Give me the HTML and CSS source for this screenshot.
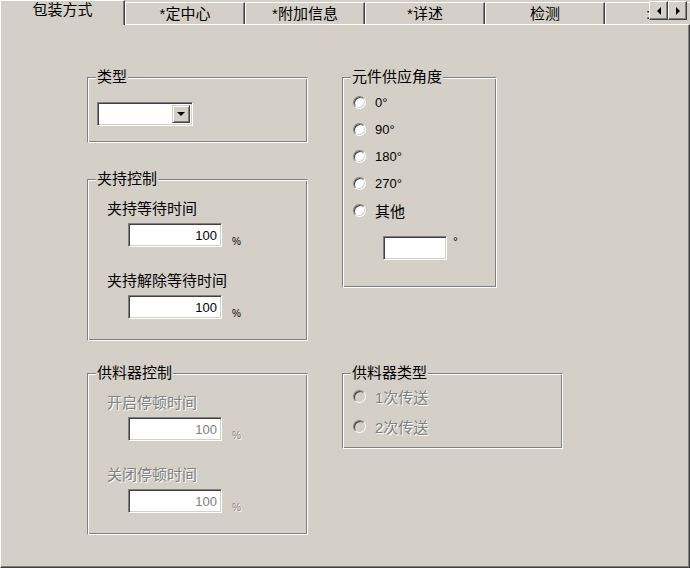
FILE: index.html
```html
<!DOCTYPE html>
<html lang="zh-CN">
<head>
    <meta charset="UTF-8">
    <title>包装方式</title>
    <link rel="stylesheet" href="styles.css">
</head>
<body>
    <div class="window">
        <div class="tabs">
            <div class="tab active">包装方式</div>
            <div class="tab">*定中心</div>
            <div class="tab">*附加信息</div>
            <div class="tab">*详述</div>
            <div class="tab">检测</div>
            <div class="tab tab-cut">:</div>
            <div class="tab-scroll">
                <button class="arrow-btn"><span class="arrow-left"></span></button>
                <button class="arrow-btn"><span class="arrow-right"></span></button>
            </div>
        </div>

        <div class="panel">
            <div class="col">
                <div class="group g-type">
                    <span class="group-title">类型</span>
                    <div class="combo">
                        <span class="combo-btn"><span class="arrow-down"></span></span>
                    </div>
                </div>

                <div class="group g-clamp">
                    <span class="group-title">夹持控制</span>
                    <div class="field-label">夹持等待时间</div>
                    <div class="field-row">
                        <input class="edit" type="text" value="100">
                        <span class="unit">%</span>
                    </div>
                    <div class="field-label second">夹持解除等待时间</div>
                    <div class="field-row">
                        <input class="edit" type="text" value="100">
                        <span class="unit">%</span>
                    </div>
                </div>
            </div>

            <div class="group g-angle">
                <span class="group-title">元件供应角度</span>
                <label class="radio-row"><input class="radio" type="radio" name="angle"><span class="num">0°</span></label>
                <label class="radio-row"><input class="radio" type="radio" name="angle"><span class="num">90°</span></label>
                <label class="radio-row"><input class="radio" type="radio" name="angle"><span class="num">180°</span></label>
                <label class="radio-row"><input class="radio" type="radio" name="angle"><span class="num">270°</span></label>
                <label class="radio-row"><input class="radio" type="radio" name="angle"><span>其他</span></label>
                <div class="angle-row">
                    <input class="edit edit-short" type="text" value="">
                    <span class="degree">°</span>
                </div>
            </div>

            <div class="group g-feedctl">
                <span class="group-title">供料器控制</span>
                <div class="field-label disabled">开启停顿时间</div>
                <div class="field-row">
                    <input class="edit" type="text" value="100" disabled>
                    <span class="unit disabled">%</span>
                </div>
                <div class="field-label second disabled">关闭停顿时间</div>
                <div class="field-row">
                    <input class="edit" type="text" value="100" disabled>
                    <span class="unit disabled">%</span>
                </div>
            </div>

            <div class="group g-feedtype">
                <span class="group-title">供料器类型</span>
                <label class="radio-row wide"><input class="radio" type="radio" name="feed" disabled><span class="disabled">1次传送</span></label>
                <label class="radio-row wide"><input class="radio" type="radio" name="feed" disabled><span class="disabled">2次传送</span></label>
            </div>
        </div>
    </div>
</body>
</html>
```

FILE: styles.css
```css
* {
    box-sizing: border-box;
}
body {
    margin: 0;
    background-color: #d4d0c8;
    font-family: "Liberation Sans", "Noto Sans CJK SC", sans-serif;
    font-size: 15px;
    color: #000;
}
.window {
    width: 690px;
    height: 568px;
    overflow: hidden;
}

/* tab strip */
.tabs {
    position: relative;
    display: flex;
    align-items: flex-start;
    height: 24px;
}
.tab {
    flex: 0 0 120px;
    height: 22px;
    margin-top: 2px;
    padding-top: 2px;
    line-height: 18px;
    text-align: center;
    white-space: nowrap;
    border-top: 1px solid #fff;
    border-left: 1px solid #fff;
    border-right: 1px solid #404040;
    box-shadow: inset -1px 0 #808080;
}
.tab.active {
    flex-basis: 125px;
    height: 25px;
    margin-top: 0;
    padding-top: 0;
    position: relative;
    z-index: 1;
    background-color: #d4d0c8;
}
.tab-cut {
    text-align: left;
    padding-left: 40px;
}
.tab-scroll {
    position: absolute;
    top: 1px;
    right: 3px;
    display: flex;
    z-index: 2;
}
.arrow-btn {
    width: 19px;
    height: 19px;
    padding: 0;
    margin: 0;
    background-color: #d4d0c8;
    border: 1px solid;
    border-color: #fff #404040 #404040 #fff;
    box-shadow: inset -1px -1px #808080;
    display: flex;
    align-items: center;
    justify-content: center;
}
.arrow-left {
    width: 0;
    height: 0;
    border-top: 4px solid transparent;
    border-bottom: 4px solid transparent;
    border-right: 4px solid #000;
}
.arrow-right {
    width: 0;
    height: 0;
    border-top: 4px solid transparent;
    border-bottom: 4px solid transparent;
    border-left: 4px solid #000;
}

/* page body */
.panel {
    height: 544px;
    border: 1px solid;
    border-color: #fff #404040 #404040 #fff;
    box-shadow: inset -1px -1px #808080;
    padding: 52px 0 0 86px;
    display: grid;
    grid-template-columns: 221px 221px;
    column-gap: 34px;
    row-gap: 32px;
    align-items: start;
    align-content: start;
}
.col {
    display: flex;
    flex-direction: column;
    gap: 36px;
}

/* etched group box */
.group {
    position: relative;
    border: 1px solid;
    border-color: #808080 #fff #fff #808080;
    box-shadow: inset 1px 1px #fff, inset -1px -1px #808080;
}
.group-title {
    position: absolute;
    top: -9px;
    left: 8px;
    padding: 0 1px;
    line-height: 16px;
    background-color: #d4d0c8;
    white-space: nowrap;
}
.g-type {
    height: 66px;
    padding: 24px 0 0 9px;
}
.g-clamp,
.g-feedctl {
    height: 162px;
    padding-top: 20px;
}
.g-angle {
    width: 155px;
    height: 211px;
    padding: 11px 0 0 10px;
}
.g-feedtype {
    height: 76px;
    padding: 7px 0 0 10px;
}

/* fields */
.field-label {
    padding-left: 19px;
    line-height: 18px;
    white-space: nowrap;
}
.field-label.second {
    margin-top: 25px;
}
.field-row {
    display: flex;
    align-items: flex-end;
    margin-top: 5px;
    padding-left: 40px;
}
.edit {
    width: 94px;
    height: 24px;
    margin: 0;
    padding: 0 4px 0 2px;
    border: 1px solid;
    border-color: #808080 #fff #fff #808080;
    box-shadow: inset 1px 1px #404040, inset -1px -1px #d4d0c8;
    background-color: #fff;
    font-family: "Liberation Sans", sans-serif;
    font-size: 13px;
    color: #000;
    text-align: right;
    outline: none;
}
.edit:disabled {
    color: #808080;
    background-color: #fff;
}
.edit-short {
    width: 64px;
}
.unit {
    margin-left: 10px;
    font-size: 10px;
    line-height: 10px;
}
.disabled {
    color: #808080;
    text-shadow: 1px 1px 0 #fff;
}

/* combo box */
.combo {
    width: 96px;
    height: 24px;
    padding: 2px;
    display: flex;
    justify-content: flex-end;
    border: 1px solid;
    border-color: #808080 #fff #fff #808080;
    box-shadow: inset 1px 1px #404040, inset -1px -1px #d4d0c8;
    background-color: #fff;
}
.combo-btn {
    width: 18px;
    height: 100%;
    display: flex;
    align-items: center;
    justify-content: center;
    background-color: #d4d0c8;
    border: 1px solid;
    border-color: #d4d0c8 #404040 #404040 #d4d0c8;
    box-shadow: inset 1px 1px #fff, inset -1px -1px #808080;
}
.arrow-down {
    width: 0;
    height: 0;
    border-left: 4px solid transparent;
    border-right: 4px solid transparent;
    border-top: 4px solid #000;
}

/* radio buttons */
.radio-row {
    display: flex;
    align-items: center;
    height: 27px;
    white-space: nowrap;
}
.radio-row.wide {
    height: 30px;
}
.radio {
    appearance: none;
    -webkit-appearance: none;
    width: 13px;
    height: 13px;
    margin: 0 9px 0 0;
    border-radius: 50%;
    border: 1px solid;
    border-color: #808080 #fff #fff #808080;
    box-shadow: inset 1px 1px #404040, inset -1px -1px #d4d0c8;
    background-color: #fff;
}
.radio:disabled {
    background-color: #d4d0c8;
}
.num {
    font-size: 13px;
}
.angle-row {
    display: flex;
    align-items: flex-start;
    margin-top: 12px;
    padding-left: 30px;
}
.degree {
    margin-left: 6px;
    font-size: 12px;
    line-height: 12px;
}
```
